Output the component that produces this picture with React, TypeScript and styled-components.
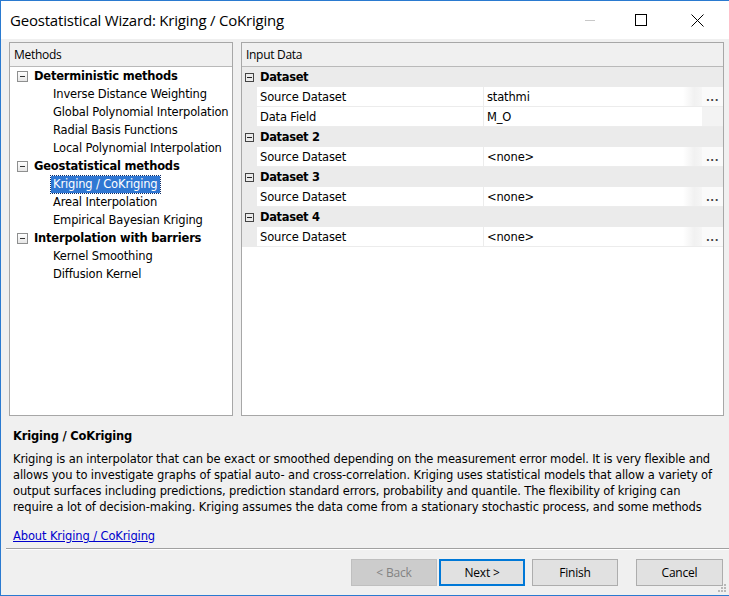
import React from 'react'
import styled, { createGlobalStyle } from 'styled-components'

const GlobalStyle = createGlobalStyle`
  html, body {
    margin: 0;
    padding: 0;
    background: #ffffff;
  }
  * {
    box-sizing: border-box;
  }
`

const ui = `"DejaVu Sans", Verdana, sans-serif`
const sys = `"Open Sans", "Noto Sans", sans-serif`

const Window = styled.div`
  width: 729px;
  height: 596px;
  border: 1px solid #2a7ad0;
  border-right: none;
  display: flex;
  flex-direction: column;
  background: #f0f0f0;
  overflow: hidden;
`

const TitleBar = styled.div`
  height: 38px;
  flex: none;
  background: #ffffff;
  display: flex;
  align-items: center;
  padding: 0 4px 0 9px;
`

const Title = styled.div`
  flex: 1;
  font-family: ${sys};
  font-size: 15px;
  letter-spacing: -0.2px;
  color: #000;
  padding-bottom: 1px;
`

const CaptionButton = styled.div<{ $w: number }>`
  width: ${p => p.$w}px;
  height: 38px;
  display: flex;
  align-items: center;
  justify-content: center;
`

const Client = styled.div`
  flex: 1;
  display: flex;
  flex-direction: column;
  padding: 3px 5px 0 8px;
  position: relative;
`

const Panels = styled.div`
  height: 374px;
  display: flex;
  gap: 8px;
`

const Panel = styled.div<{ $w?: number }>`
  ${p => (p.$w ? `width: ${p.$w}px;` : 'flex: 1;')}
  border: 1px solid #a7a7a7;
  background: #ffffff;
  display: flex;
  flex-direction: column;
`

const PanelHeader = styled.div`
  height: 24px;
  flex: none;
  background: #f0f0f0;
  border-bottom: 1px solid #b9b9b9;
  font-family: ${sys};
  font-size: 12px;
  letter-spacing: -0.3px;
  line-height: 23px;
  padding-left: 4px;
  color: #000;
`

const Tree = styled.div`
  flex: 1;
`

const TreeRow = styled.div<{ $indent: number }>`
  height: 18px;
  display: flex;
  align-items: center;
  padding-left: ${p => p.$indent}px;
  font-family: ${ui};
  font-size: 11.5px;
  letter-spacing: -0.15px;
  color: #000;
  white-space: nowrap;
`

const Expander = styled.div`
  width: 11px;
  height: 11px;
  border: 1px solid #8e8f8f;
  background: linear-gradient(#ffffff, #e6e6e6);
  display: flex;
  align-items: center;
  justify-content: center;
  margin-right: 6px;
  &::after {
    content: '';
    width: 5px;
    height: 1px;
    background: #333;
  }
`

const CategoryLabel = styled.span`
  font-weight: bold;
  letter-spacing: -0.2px;
`

const ItemLabel = styled.span<{ $selected?: boolean }>`
  padding: 1px 2px 2px;
  margin-left: -2px;
  background: ${p => (p.$selected ? '#2f77d3' : 'transparent')};
  color: ${p => (p.$selected ? '#ffffff' : '#000')};
  outline: ${p => (p.$selected ? '1px dotted #0d2c66' : 'none')};
`

const Grid = styled.div`
  flex: 1;
  display: flex;
  flex-direction: column;
`

const CategoryRow = styled.div`
  height: 20px;
  flex: none;
  background: #ebebeb;
  display: flex;
  align-items: center;
  font-family: ${ui};
  font-size: 11.5px;
  letter-spacing: -0.35px;
  font-weight: bold;
  color: #000;
`

const GridExpander = styled.div`
  width: 9px;
  height: 9px;
  border: 1px solid #444;
  margin: 0 6px 0 3px;
  display: flex;
  align-items: center;
  justify-content: center;
  &::after {
    content: '';
    width: 5px;
    height: 1px;
    background: #222;
  }
`

const PropRow = styled.div`
  height: 20px;
  flex: none;
  display: flex;
  background: #ebebeb;
  font-family: ${ui};
  font-size: 11.5px;
  letter-spacing: -0.15px;
  color: #000;
`

const NameCell = styled.div`
  margin-left: 15px;
  width: 227px;
  background: #ffffff;
  border-bottom: 1px solid #ececec;
  border-right: 1px solid #ececec;
  padding-left: 3px;
  line-height: 20px;
`

const ValueCell = styled.div`
  flex: 1;
  display: flex;
  background: #ffffff;
  border-bottom: 1px solid #ececec;
`

const ValueText = styled.div`
  flex: 1;
  padding-left: 3px;
  line-height: 20px;
`

const DropFade = styled.div`
  width: 19px;
  background: linear-gradient(90deg, #ffffff, #f1f1f1 60%, #f6f6f6);
`

const Ellipsis = styled.div<{ $empty?: boolean }>`
  width: 21px;
  background: ${p => (p.$empty ? '#f3f3f3' : '#fafafa')};
  font-size: 10px;
  font-weight: bold;
  color: #444;
  text-align: center;
  line-height: 22px;
  letter-spacing: 0.5px;
`

const Description = styled.div`
  padding: 12px 0 0 4px;
  font-family: ${ui};
  font-size: 11.5px;
  letter-spacing: -0.12px;
  color: #000;
  height: 132px;
  flex: none;
`

const DescTitle = styled.div`
  font-weight: bold;
  line-height: 16px;
  letter-spacing: -0.2px;
`

const DescText = styled.p`
  margin: 7px 0 0;
  line-height: 16px;
  width: 706px;
`

const AboutLink = styled.a`
  display: inline-block;
  margin-top: 13px;
  line-height: 16px;
  color: #0000cc;
  text-decoration: underline;
`

const Separator = styled.div`
  margin-left: -3px;
  margin-right: -5px;
  height: 2px;
  border-top: 1px solid #a0a0a0;
  border-bottom: 1px solid #ffffff;
  flex: none;
`

const ButtonRow = styled.div`
  display: flex;
  justify-content: flex-end;
  padding: 9px 1px 0 0;
`

const Button = styled.button<{ $gap: number; $primary?: boolean; $w?: number }>`
  width: ${p => p.$w ?? 86}px;
  height: 27px;
  margin-left: ${p => p.$gap}px;
  font-family: ${sys};
  font-size: 12px;
  letter-spacing: -0.2px;
  color: #000;
  background: #e1e1e1;
  border: ${p => (p.$primary ? '2px solid #0078d7' : '1px solid #adadad')};
  padding: 0;
  &:disabled {
    background: #cccccc;
    border-color: #bfbfbf;
    color: #838383;
  }
`

const Grip = styled.svg`
  position: absolute;
  right: 3px;
  bottom: 3px;
`

const methods: { title: string; items: string[] }[] = [
  {
    title: 'Deterministic methods',
    items: [
      'Inverse Distance Weighting',
      'Global Polynomial Interpolation',
      'Radial Basis Functions',
      'Local Polynomial Interpolation',
    ],
  },
  {
    title: 'Geostatistical methods',
    items: ['Kriging / CoKriging', 'Areal Interpolation', 'Empirical Bayesian Kriging'],
  },
  {
    title: 'Interpolation with barriers',
    items: ['Kernel Smoothing', 'Diffusion Kernel'],
  },
]

const datasets: { title: string; props: { name: string; value: string; button: boolean }[] }[] = [
  {
    title: 'Dataset',
    props: [
      { name: 'Source Dataset', value: 'stathmi', button: true },
      { name: 'Data Field', value: 'M_O', button: false },
    ],
  },
  { title: 'Dataset 2', props: [{ name: 'Source Dataset', value: '<none>', button: true }] },
  { title: 'Dataset 3', props: [{ name: 'Source Dataset', value: '<none>', button: true }] },
  { title: 'Dataset 4', props: [{ name: 'Source Dataset', value: '<none>', button: true }] },
]

export default function App() {
  return (
    <>
      <GlobalStyle />
      <Window>
        <TitleBar>
          <Title>Geostatistical Wizard: Kriging / CoKriging</Title>
          <CaptionButton $w={46}>
            <svg width="12" height="12" viewBox="0 0 12 12">
              <line x1="1" y1="6.5" x2="11" y2="6.5" stroke="#c8c8c8" strokeWidth="1" />
            </svg>
          </CaptionButton>
          <CaptionButton $w={56}>
            <svg width="12" height="12" viewBox="0 0 12 12">
              <rect x="0.5" y="0.5" width="11" height="11" fill="none" stroke="#000" strokeWidth="1" />
            </svg>
          </CaptionButton>
          <CaptionButton $w={56}>
            <svg width="13" height="13" viewBox="0 0 13 13">
              <path d="M0.5 0.5 L12.5 12.5 M12.5 0.5 L0.5 12.5" stroke="#000" strokeWidth="1" />
            </svg>
          </CaptionButton>
        </TitleBar>
        <Client>
          <Panels>
            <Panel $w={224}>
              <PanelHeader>Methods</PanelHeader>
              <Tree>
                {methods.map(group => (
                  <React.Fragment key={group.title}>
                    <TreeRow $indent={7}>
                      <Expander />
                      <CategoryLabel>{group.title}</CategoryLabel>
                    </TreeRow>
                    {group.items.map(item => (
                      <TreeRow $indent={43} key={item}>
                        <ItemLabel $selected={item === 'Kriging / CoKriging'}>{item}</ItemLabel>
                      </TreeRow>
                    ))}
                  </React.Fragment>
                ))}
              </Tree>
            </Panel>
            <Panel>
              <PanelHeader>Input Data</PanelHeader>
              <Grid>
                {datasets.map(ds => (
                  <React.Fragment key={ds.title}>
                    <CategoryRow>
                      <GridExpander />
                      {ds.title}
                    </CategoryRow>
                    {ds.props.map(p => (
                      <PropRow key={p.name}>
                        <NameCell>{p.name}</NameCell>
                        <ValueCell>
                          <ValueText>{p.value}</ValueText>
                          {p.button && <DropFade />}
                          <Ellipsis $empty={!p.button}>{p.button ? '...' : ''}</Ellipsis>
                        </ValueCell>
                      </PropRow>
                    ))}
                  </React.Fragment>
                ))}
              </Grid>
            </Panel>
          </Panels>
          <Description>
            <DescTitle>Kriging / CoKriging</DescTitle>
            <DescText>
              Kriging is an interpolator that can be exact or smoothed depending on the measurement error model. It is
              very flexible and allows you to investigate graphs of spatial auto- and cross-correlation. Kriging uses
              statistical models that allow a variety of output surfaces including predictions, prediction standard
              errors, probability and quantile. The flexibility of kriging can require a lot of decision-making.
              Kriging assumes the data come from a stationary stochastic process, and some methods
            </DescText>
            <AboutLink href="#">About Kriging / CoKriging</AboutLink>
          </Description>
          <Separator />
          <ButtonRow>
            <Button $gap={0} disabled>
              &lt; Back
            </Button>
            <Button $gap={2} $primary>
              Next &gt;
            </Button>
            <Button $gap={7}>Finish</Button>
            <Button $gap={18} $w={87}>
              Cancel
            </Button>
          </ButtonRow>
          <Grip width="8" height="8" viewBox="0 0 8 8">
            {[
              [6, 0],
              [6, 3],
              [3, 3],
              [6, 6],
              [3, 6],
              [0, 6],
            ].map(([x, y]) => (
              <rect key={`${x}-${y}`} x={x} y={y} width="2" height="2" fill="#b8b8b8" />
            ))}
          </Grip>
        </Client>
      </Window>
    </>
  )
}
